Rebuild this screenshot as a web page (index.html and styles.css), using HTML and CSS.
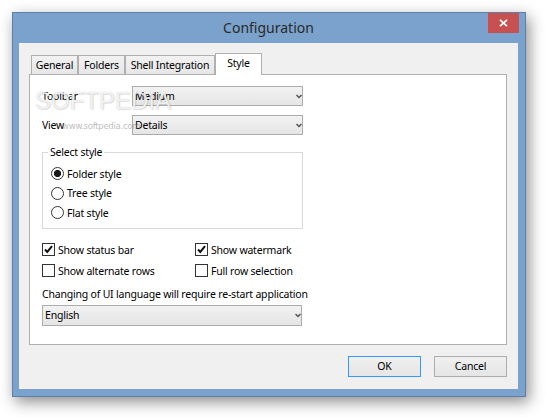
FILE: index.html
```html
<!DOCTYPE html>
<html lang="en">
<head>
<meta charset="utf-8">
<title>Configuration</title>
<link rel="stylesheet" href="styles.css">
</head>
<body>
<div class="window">
  <div class="titlebar">
    <span class="title">Configuration</span>
    <div class="close">
      <svg width="9" height="8" viewBox="0 0 9 8"><path d="M1 0.8 L8 7.2 M8 0.8 L1 7.2" stroke="#fff" stroke-width="1.7" fill="none"/></svg>
    </div>
  </div>
  <div class="client">
    <div class="tabs">
      <div class="tab t-general">General</div>
      <div class="tab t-folders">Folders</div>
      <div class="tab t-shell">Shell Integration</div>
      <div class="tab active t-style">Style</div>
    </div>
    <div class="panel">
      <div class="field">
        <span class="lbl">Toolbar</span>
        <div class="combo">
          <span>Medium</span>
          <svg class="arrow" width="6" height="5" viewBox="0 0 6 5"><path d="M0.5 1 L3 3.6 L5.5 1" stroke="#555" stroke-width="1.4" fill="none"/></svg>
        </div>
      </div>
      <div class="field">
        <span class="lbl">View</span>
        <div class="combo">
          <span>Details</span>
          <svg class="arrow" width="6" height="5" viewBox="0 0 6 5"><path d="M0.5 1 L3 3.6 L5.5 1" stroke="#555" stroke-width="1.4" fill="none"/></svg>
        </div>
      </div>
      <fieldset class="group">
        <legend>Select style</legend>
        <div class="opt"><span class="radio on"></span>Folder style</div>
        <div class="opt"><span class="radio"></span>Tree style</div>
        <div class="opt"><span class="radio"></span>Flat style</div>
      </fieldset>
      <div class="checks">
        <div class="opt row"><span class="check"><svg width="11" height="11" viewBox="0 0 11 11"><path d="M2 5.5 L4.3 8 L9 2.2" stroke="#111" stroke-width="2" fill="none"/></svg></span>Show status bar</div>
        <div class="opt row"><span class="check"><svg width="11" height="11" viewBox="0 0 11 11"><path d="M2 5.5 L4.3 8 L9 2.2" stroke="#111" stroke-width="2" fill="none"/></svg></span>Show watermark</div>
        <div class="opt row"><span class="check"></span>Show alternate rows</div>
        <div class="opt row"><span class="check"></span>Full row selection</div>
      </div>
      <div class="note">Changing of UI language will require re-start application</div>
      <div class="combo wide">
        <span>English</span>
        <svg class="arrow" width="6" height="5" viewBox="0 0 6 5"><path d="M0.5 1 L3 3.6 L5.5 1" stroke="#555" stroke-width="1.4" fill="none"/></svg>
      </div>
    </div>
    <div class="buttons">
      <div class="btn default">OK</div>
      <div class="btn">Cancel</div>
    </div>
  </div>
  <div class="wm-logo">SOFTPEDIA</div>
  <div class="wm-url">www.softpedia.com</div>
</div>
</body>
</html>
```
FILE: styles.css
```css
html, body {
  margin: 0;
  background: #ffffff;
}
body {
  width: 546px;
  height: 417px;
  padding: 12px;
  box-sizing: border-box;
  overflow: hidden;
  font-family: "Noto Sans", "Open Sans", sans-serif;
  font-size: 10.5px;
  letter-spacing: -0.2px;
  color: #000;
}
.window {
  position: relative;
  width: 514px;
  height: 385px;
  box-sizing: border-box;
  border: 1px solid #5f80a6;
  background: #7ba2cc;
  padding: 0 7px 7px 6px;
  box-shadow: 3px 5px 14px rgba(0, 0, 0, 0.45);
  display: flex;
  flex-direction: column;
}
.titlebar {
  height: 30px;
  display: grid;
  grid-template-columns: 1fr auto 1fr;
  align-items: start;
}
.title {
  grid-column: 2;
  font-size: 14px;
  letter-spacing: 0;
  line-height: 30px;
  color: #2a2a2a;
}
.close {
  grid-column: 3;
  justify-self: end;
  width: 31px;
  height: 20px;
  margin-right: -1px;
  background: #c75050;
  display: flex;
  align-items: center;
  justify-content: center;
}
.client {
  flex: 1;
  background: #f0f0f0;
  padding: 10px 11px 0 10px;
  display: flex;
  flex-direction: column;
}
.tabs {
  height: 21px;
  display: flex;
  align-items: flex-end;
  padding-left: 2px;
}
.tab {
  box-sizing: border-box;
  height: 19px;
  border: 1px solid #b0b0b0;
  border-bottom: 0;
  background: linear-gradient(#f2f2f2, #e6e6e6);
  text-align: center;
  line-height: 18px;
  white-space: nowrap;
}
.t-general { width: 47px; }
.t-folders { width: 47px; }
.t-shell { width: 90px; }
.t-style { width: 47px; }
.tab.active {
  height: 22px;
  margin-bottom: -1px;
  background: #ffffff;
  line-height: 19px;
  position: relative;
  z-index: 1;
}
.panel {
  box-sizing: border-box;
  width: 478px;
  height: 271px;
  border: 1px solid #b0b0b0;
  background: #ffffff;
  padding: 11px 0 0 12px;
}
.field {
  display: flex;
  align-items: center;
  height: 20px;
}
.field + .field {
  margin-top: 9px;
}
.lbl {
  width: 90px;
}
.combo {
  box-sizing: border-box;
  width: 171px;
  height: 20px;
  border: 1px solid #acacac;
  background: linear-gradient(#f2f2f2, #e5e5e5);
  display: flex;
  align-items: center;
  justify-content: space-between;
  padding: 0 0 0 2px;
}
.combo.wide {
  width: 260px;
  height: 21px;
  margin-top: 3px;
}
.arrow {
  margin-top: 1px;
}
.group {
  box-sizing: border-box;
  width: 261px;
  margin: 9px 0 0 0;
  border: 1px solid #d9d9d9;
  padding: 4px 6px 5px 8px;
}
.group legend {
  padding: 0 2px;
  margin-left: -3px;
  line-height: 16px;
}
.opt {
  display: flex;
  align-items: center;
  gap: 3px;
  height: 19.5px;
  white-space: nowrap;
}
.radio {
  box-sizing: border-box;
  width: 13px;
  height: 13px;
  border: 1px solid #333;
  border-radius: 50%;
  background: #fff;
}
.radio.on {
  background: radial-gradient(circle, #1a1a1a 0 3.3px, #ffffff 3.9px);
}
.checks {
  display: grid;
  grid-template-columns: 153px auto;
  row-gap: 1px;
  margin-top: 11px;
}
.opt.row {
  height: 20px;
}
.check {
  box-sizing: border-box;
  width: 13px;
  height: 13px;
  border: 1px solid #333;
  background: #fff;
  display: flex;
  align-items: center;
  justify-content: center;
}
.note {
  margin-top: 5px;
  line-height: 16px;
}
.buttons {
  display: flex;
  justify-content: flex-end;
  gap: 13px;
  margin-top: 11px;
}
.btn {
  box-sizing: border-box;
  width: 73px;
  height: 21px;
  border: 1px solid #adadad;
  background: linear-gradient(#f0f0f0, #e5e5e5);
  text-align: center;
  line-height: 19px;
}
.btn.default {
  border-color: #3399ff;
}
.wm-logo {
  position: absolute;
  left: 22px;
  top: 74px;
  font-family: "Liberation Sans", sans-serif;
  font-size: 24px;
  letter-spacing: 0;
  color: rgba(255, 255, 255, 0.85);
  text-shadow: 0 0 1px rgba(0, 0, 0, 0.28), 1px 1px 1px rgba(0, 0, 0, 0.1);
  pointer-events: none;
}
.wm-url {
  position: absolute;
  left: 49px;
  top: 107px;
  font-family: "DejaVu Sans Condensed", "Liberation Sans", sans-serif;
  font-size: 9.5px;
  letter-spacing: -0.3px;
  color: rgba(120, 120, 120, 0.5);
  pointer-events: none;
}
```
